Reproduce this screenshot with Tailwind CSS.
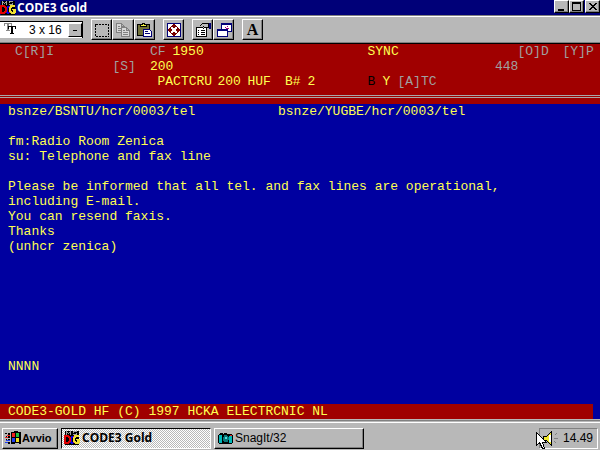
<!DOCTYPE html>
<html lang="it">
<head>
    <meta charset="UTF-8">
    <meta name="viewport" content="width=device-width, initial-scale=1.0">
    <title>CODE3 Gold</title>
    <script src="https://cdn.jsdelivr.net/npm/@tailwindcss/browser@4"></script>
</head>
<body class="flex min-h-screen flex-col overflow-hidden bg-[#b8b8b8] font-['Liberation_Sans',Arial,sans-serif] text-xs text-black">
    <!-- icons used more than once -->
    <svg class="hidden" aria-hidden="true">
        <symbol id="logo" viewBox="0 0 16 16" shape-rendering="crispEdges">
            <path fill="#000" d="M1 1h14v14H1z"/>
            <path fill="#a0a0a0" d="M2 1h1v1h1v1h1V2h1V1h1v4H6V3H5v1H4V3H3v2H2zM9 1h4v1h-3v1h3v2H9V4h3V3H9z"/>
            <path fill="#e00000" d="M0 5h5v1h1v1h1v5H6v1H5v1H0zM2 7v5h2v-1h1V8H4V7z" fill-rule="evenodd"/>
            <path fill="#0000e0" d="M7 6h2v2H8v4h1v2H7v-1H6v-1h1z"/>
            <path fill="#a000a0" d="M9 6h2v7H9z"/>
            <path fill="#f0e030" d="M10 5h5v2h-3v1h-1v3h1v1h1v-2h-1V9h4v4h-1v1h-4v-1h-1v-1H9V7h1z"/>
        </symbol>
    </svg>

    <header class="flex h-[15px] items-center bg-[#000078] text-white">
        <svg class="size-4 shrink-0"><use href="#logo"/></svg>
        <h1 class="flex-1 pl-px font-['Open_Sans',sans-serif] text-xs leading-3 font-bold">CODE3 Gold</h1>
        <div class="flex h-[13px] self-start">
            <button aria-label="Minimize" class="flex h-[13px] w-[15px] items-center justify-center border border-white border-r-black border-b-black bg-[#b8b8b8] shadow-[inset_-1px_-1px_#808080]">
                <svg class="size-3 shrink-0" viewBox="0 0 12 12" shape-rendering="crispEdges"><path d="M2 8h6v2H2z"/></svg>
            </button>
            <button aria-label="Maximize" class="flex h-[13px] w-[15px] items-center justify-center border border-white border-r-black border-b-black bg-[#b8b8b8] shadow-[inset_-1px_-1px_#808080]">
                <svg class="size-3 shrink-0" viewBox="0 0 12 12" shape-rendering="crispEdges"><path d="M1 1h9v9H1zM2 3v6h7V3z" fill-rule="evenodd"/></svg>
            </button>
            <button aria-label="Close" class="ml-px flex h-[13px] w-[15px] items-center justify-center border border-white border-r-black border-b-black bg-[#b8b8b8] shadow-[inset_-1px_-1px_#808080]">
                <svg class="size-3 shrink-0" viewBox="0 0 12 12" shape-rendering="crispEdges"><path d="M2 2h2v1h1v1h2V3h1V2h2v1H9v1H8v1H7v1h1v1h1v1h1v1H8V8H7V7H5v1H4v1H2V8h1V7h1V6h1V5H4V4H3V3H2z"/></svg>
            </button>
        </div>
    </header>

    <!-- toolbar -->
    <div class="flex h-[29px] items-center border-t border-b border-t-[#808080] border-b-black shadow-[inset_0_1px_#fff,inset_0_-1px_#808080]">
        <label for="font" class="sr-only">Font</label>
        <div class="relative h-[17px] w-[83px] border-t border-r border-black bg-white">
            <svg class="absolute top-px left-1 size-3" viewBox="0 0 12 12" shape-rendering="crispEdges">
                <path fill="#888" d="M0 0h8v3H7V1H5v6h1v1H2V7h1V1H1v2H0z"/>
                <path d="M4 3h8v3h-1V4H9v6h1v1H6v-1h1V4H5v2H4z"/>
            </svg>
            <select id="font" class="block h-4 w-full appearance-none pl-[29px] text-xs leading-4">
                <option>3 x 16</option>
            </select>
            <span class="pointer-events-none absolute top-px right-0 flex h-[14px] w-[14px] items-center justify-center border border-white border-r-black border-b-black bg-[#b8b8b8]"><span class="h-px w-1 bg-black"></span></span>
        </div>
        <div class="ml-2 flex">
            <button aria-label="Mark" class="flex h-[21px] w-[21px] items-center justify-center border border-white border-r-black border-b-black bg-[#b8b8b8] shadow-[inset_-1px_-1px_#808080]">
                <svg class="size-4" viewBox="0 0 16 16" shape-rendering="crispEdges"><rect x="1.5" y="2.5" width="13" height="12" fill="none" stroke="#000" stroke-dasharray="2 1"/></svg>
            </button>
            <button aria-label="Copy" class="flex h-[21px] w-[22px] items-center justify-center border border-white border-r-black border-b-black bg-[#b8b8b8] shadow-[inset_-1px_-1px_#808080]">
                <svg class="size-4" viewBox="0 0 16 16" shape-rendering="crispEdges" fill="#d8d8d8" stroke="#808080">
                    <path d="M1.5 1.5h5l3 3v6h-8zM6.5 1.5v3h3M3 4.500h2M3 6.500h4M3 8.500h4"/>
                    <path d="M6.500 5.500h5l3 3v6h-8zM11.500 5.500v3h3M8 8.500h2M8 10.500h5M8 12.500h5"/>
                </svg>
            </button>
            <button aria-label="Paste" class="flex h-[21px] w-[21px] items-center justify-center border border-white border-r-black border-b-black bg-[#b8b8b8] shadow-[inset_-1px_-1px_#808080]">
                <svg class="size-4" viewBox="0 0 16 16" shape-rendering="crispEdges">
                    <path fill="#707038" stroke="#000" d="M.5 2.500h12v11H.5z"/>
                    <path fill="#f0f040" stroke="#000" d="M3.500 4.500v-2h2v-1h2v1h2v2z"/>
                    <path fill="#fff" stroke="#000078" d="M6.500 7.500h6l2 2v5h-8zM8 9.500h3M8 11.500h5"/>
                </svg>
            </button>
            <button aria-label="Full screen" class="ml-[8px] flex h-[21px] w-[21px] items-center justify-center border border-white border-r-black border-b-black bg-[#b8b8b8] shadow-[inset_-1px_-1px_#808080]">
                <svg class="size-4" viewBox="0 0 16 16" shape-rendering="crispEdges">
                    <path fill="#fff" stroke="#000078" d="M1.500 1.500h13v13h-13z"/>
                    <path fill="#780000" d="M7 2h2v1h1v1h1v1H9v1H7V5H5V4h1V3h1zM7 14h2v-1h1v-1h1v-1H9v-1H7v1H5v1h1v1h1zM2 7v2h1v1h1v1h1V9h1V7H5V5H4v1H3v1zM14 7v2h-1v1h-1v1h-1V9h-1V7h1V5h1v1h1v1z"/>
                </svg>
            </button>
            <button aria-label="Properties" class="ml-[8px] flex h-[21px] w-[21px] items-center justify-center border border-white border-r-black border-b-black bg-[#b8b8b8] shadow-[inset_-1px_-1px_#808080]">
                <svg class="size-4" viewBox="0 0 16 16" shape-rendering="crispEdges">
                    <path fill="#fff" stroke="#000" d="M1.500 5.500h10v9h-10zM6 8.500h4M6 10.500h4M6 12.500h4M3 8.500h1M3 10.500h1M3 12.500h1"/>
                    <path fill="#b8b8b8" stroke="#000" d="M4.500 4.500l3-3h6v4h-4l-1 1-1-1 1-1"/>
                    <path fill="#000078" d="M14 1h2v6h-2z"/>
                </svg>
            </button>
            <button aria-label="Background" class="flex h-[21px] w-[21px] items-center justify-center border border-white border-r-black border-b-black bg-[#b8b8b8] shadow-[inset_-1px_-1px_#808080]">
                <svg class="size-4" viewBox="0 0 16 16" shape-rendering="crispEdges">
                    <path fill="#fff" stroke="#000078" d="M5.500 1.500h10v8h-10z"/><path fill="#000078" d="M5 1h11v2H5z"/>
                    <path fill="#a00078" d="M9 5h1v1H9zM11 4h1v1h-1zM10 6h3v1h-3z"/>
                    <path fill="#fff" stroke="#000078" d="M1.500 7.500h10v7h-10z"/><path fill="#000078" d="M1 7h11v2H1z"/>
                </svg>
            </button>
            <button aria-label="Font" class="ml-[8px] flex h-[21px] w-[21px] items-center justify-center border border-white border-r-black border-b-black bg-[#b8b8b8] font-['Liberation_Serif',serif] text-base leading-4 font-bold shadow-[inset_-1px_-1px_#808080]">A</button>
        </div>
    </div>

    <main class="flex flex-1 flex-col bg-[#0000a0] font-['Liberation_Mono',monospace] text-[13px] leading-[15px] text-[#ffff50]">
        <!-- status rows on the 80 column text grid -->
        <section class="bg-[#a00000] pb-[6px]">
            <div class="grid grid-cols-[repeat(80,minmax(0,1fr))] whitespace-pre text-[#a0a0a0]">
                <span class="col-start-3 row-start-1">C[R]I</span>
                <span class="col-start-21 row-start-1">CF</span>
                <span class="col-start-24 row-start-1 text-[#ffff50]">1950</span>
                <span class="col-start-50 row-start-1 text-[#ffff50]">SYNC</span>
                <span class="col-start-70 row-start-1">[O]D</span>
                <span class="col-start-76 row-start-1">[Y]P</span>
                <span class="col-start-16 row-start-2">[S]</span>
                <span class="col-start-21 row-start-2 text-[#ffff50]">200</span>
                <span class="col-start-67 row-start-2">448</span>
                <span class="col-start-22 row-start-3 text-[#ffff50]">PACTCRU</span>
                <span class="col-start-30 row-start-3 text-[#ffff50]">200</span>
                <span class="col-start-34 row-start-3 text-[#ffff50]">HUF</span>
                <span class="col-start-39 row-start-3 text-[#ffff50]">B#</span>
                <span class="col-start-42 row-start-3 text-[#ffff50]">2</span>
                <span class="col-start-50 row-start-3 text-black">B</span>
                <span class="col-start-52 row-start-3 text-[#ffff50]">Y</span>
                <span class="col-start-54 row-start-3">[A]TC</span>
            </div>
            <div class="mt-[6px] h-[3px] border-y border-[#a8a8a8]"></div>
        </section>

        <section class="flex-1 pl-2">
            <div class="flex">
                <p class="w-[270px]">bsnze/BSNTU/hcr/0003/tel</p>
                <p>bsnze/YUGBE/hcr/0003/tel</p>
            </div>
            <pre class="mt-[15px] font-['Liberation_Mono',monospace]">fm:Radio Room Zenica
su: Telephone and fax line

Please be informed that all tel. and fax lines are operational,
including E-mail.
You can resend faxis.
Thanks
(unhcr zenica)







NNNN</pre>
        </section>

        <p class="mr-[7px] bg-[#a00000] pl-2">CODE3-GOLD HF (C) 1997 HCKA ELECTRCNIC NL</p>
    </main>

    <!-- taskbar -->
    <footer class="flex h-[31px] shrink-0 items-center border-t border-[#b8b8b8] pt-[6px] pr-[2px] pl-[2px] shadow-[inset_0_1px_#808080,inset_0_2px_#b8b8b8,inset_0_3px_#fff]">
        <button class="flex h-[21px] w-14 items-center border border-white border-r-black border-b-black pl-[2px] text-[11px] font-bold shadow-[inset_-1px_-1px_#808080]">
            <svg class="size-4 shrink-0" viewBox="0 0 16 16" shape-rendering="crispEdges">
                <path d="M6 2h3V1h4v1h3v12h-2v-1h-4v1H6zM0 3h2v1H0zM3 3h2v2H3zM1 6h1v1H1zM3 6h2v2H3zM1 9h1v1H1zM3 9h2v2H3zM3 12h2v2H3z"/>
                <path fill="#f02020" d="M7 3h3v4H7zM2 5h3v1H2zM0 7h3v1H0z"/><path fill="#20c040" d="M11 3h3v4h-3z"/>
                <path fill="#2040f0" d="M7 8h3v4H7zM1 10h4v1H1zM0 12h3v1H0z"/><path fill="#f0e020" d="M11 8h3v4h-3z"/>
            </svg>
            <span class="pl-px">Avvio</span>
        </button>
        <button class="ml-[3px] flex h-[21px] w-[150px] items-center border border-black border-r-white border-b-white bg-[repeating-conic-gradient(#b8b8b8_0_25%,#fff_0_50%)] bg-size-[2px_2px] pl-[2px] font-['Open_Sans',sans-serif] text-xs font-bold">
            <svg class="size-4 shrink-0"><use href="#logo"/></svg>
            <span class="pl-[2px]">CODE3 Gold</span>
        </button>
        <button class="ml-[3px] flex h-[21px] w-[150px] items-center border border-white border-r-black border-b-black pl-[3px] text-xs shadow-[inset_-1px_-1px_#808080]">
            <svg class="size-4 shrink-0" viewBox="0 0 16 16" shape-rendering="crispEdges">
                <path d="M2 3h3v1h1V3h3v1h5v1h1v8h-1v1H1v-1H0V5h1V4h1z"/><path fill="#00b8b8" d="M1 5h3v8H1zM11 6h3v7h-3z"/>
                <path fill="#f02020" d="M12 5h2v1h-2z"/><path fill="#087878" d="M6 5h3v1h1v1h1v3h-1v2H6v-1H5V7h1z"/><path fill="#50e0e0" d="M7 7h2v2H7z"/>
            </svg>
            <span class="pl-px">SnagIt/32</span>
        </button>
        <div class="relative ml-auto flex h-[21px] w-[59px] items-center border border-[#808080] border-r-white border-b-white">
            <svg class="absolute -top-px -left-1 h-[22px] w-6" viewBox="0 0 24 22" shape-rendering="crispEdges">
                <path fill="#f0e830" stroke="#000" d="M7.500 8.500h3l5-5v14l-5-5h-3z"/>
                <path fill="#fff" d="M13 7h2v7h-2z"/>
                <path fill="none" stroke="#808080" d="M18.500 7.500l2-2M18 10.500h4M18.500 13.500l2 2"/>
                <path fill="#fff" stroke="#000" d="M.5 4.500v13l3-3 3 6h2l-2-6h4z"/>
            </svg>
            <time class="ml-auto pr-1 text-xs">14.49</time>
        </div>
    </footer>
</body>
</html>
